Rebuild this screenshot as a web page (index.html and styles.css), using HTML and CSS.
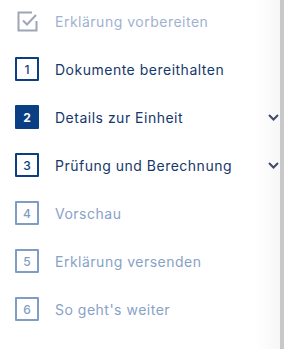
FILE: index.html
```html
<!DOCTYPE html>
<html lang="de">
<head>
<meta charset="utf-8">
<link rel="stylesheet" href="styles.css">
</head>
<body>
<div class="panel">
  <nav class="steps">
    <div class="step done">
      <span class="icon">
        <svg width="21" height="21" viewBox="0 0 21 21" fill="none" stroke="#9ea6b5" stroke-width="2" stroke-linecap="square" stroke-linejoin="miter">
          <path d="M14 1.5H1.5V19.5H19.5V11"/>
          <path d="M6 9.5L10 13.5L19 4" stroke-linecap="butt"/>
        </svg>
      </span>
      <span class="label">Erklärung vorbereiten</span>
    </div>
    <div class="step current">
      <span class="num">1</span>
      <span class="label">Dokumente bereithalten</span>
    </div>
    <div class="step current">
      <span class="num filled">2</span>
      <span class="label">Details zur Einheit</span>
      <svg class="chev" width="11" height="7" viewBox="0 0 11 7" fill="none" stroke="#3d4a68" stroke-width="2"><path d="M1 1L5.5 5.5L10 1"/></svg>
    </div>
    <div class="step current">
      <span class="num">3</span>
      <span class="label">Prüfung und Berechnung</span>
      <svg class="chev" width="11" height="7" viewBox="0 0 11 7" fill="none" stroke="#3d4a68" stroke-width="2"><path d="M1 1L5.5 5.5L10 1"/></svg>
    </div>
    <div class="step todo">
      <span class="num">4</span>
      <span class="label">Vorschau</span>
    </div>
    <div class="step todo">
      <span class="num">5</span>
      <span class="label">Erklärung versenden</span>
    </div>
    <div class="step todo">
      <span class="num">6</span>
      <span class="label">So geht's weiter</span>
    </div>
  </nav>
  <div class="scrollbar"></div>
</div>
</body>
</html>
```
FILE: styles.css
```css
html, body {
  margin: 0;
  padding: 0;
  background: #ffffff;
}
.panel {
  display: flex;
  width: 284px;
  height: 349px;
  overflow: hidden;
}
.steps {
  flex: 1;
  display: flex;
  flex-direction: column;
  padding: 0 0 0 15px;
  background: linear-gradient(to right, #ffffff 0, #ffffff 255px, #f7f7f7 100%);
}
.step {
  display: flex;
  align-items: center;
  height: 48px;
  font-family: "Inter", "DejaVu Sans", sans-serif;
  font-size: 14px;
  letter-spacing: 0.5px;
}
.step:first-child {
  margin-top: -3px;
}
.icon {
  width: 24px;
  height: 24px;
  display: flex;
  align-items: center;
  justify-content: center;
  flex: none;
}
.num {
  box-sizing: border-box;
  width: 24px;
  height: 24px;
  border: 2px solid #0a3f84;
  border-radius: 1px;
  display: flex;
  align-items: center;
  justify-content: center;
  font-size: 12px;
  font-weight: 500;
  letter-spacing: 0;
  color: #0a3f84;
  flex: none;
}
.num.filled {
  background: #0a3f84;
  color: #ffffff;
  font-weight: 700;
}
.label {
  margin-left: 16px;
  flex: 1;
  white-space: nowrap;
}
.done .label {
  color: #9fb2cf;
}
.current .label {
  color: #15386c;
}
.todo .num {
  border-color: #7f9dc5;
  color: #7f9dc5;
}
.todo .label {
  color: #87a2c7;
}
.chev {
  flex: none;
  margin-right: 1px;
}
.scrollbar {
  width: 4px;
  flex: none;
  background: #c8c8c8;
}
```
